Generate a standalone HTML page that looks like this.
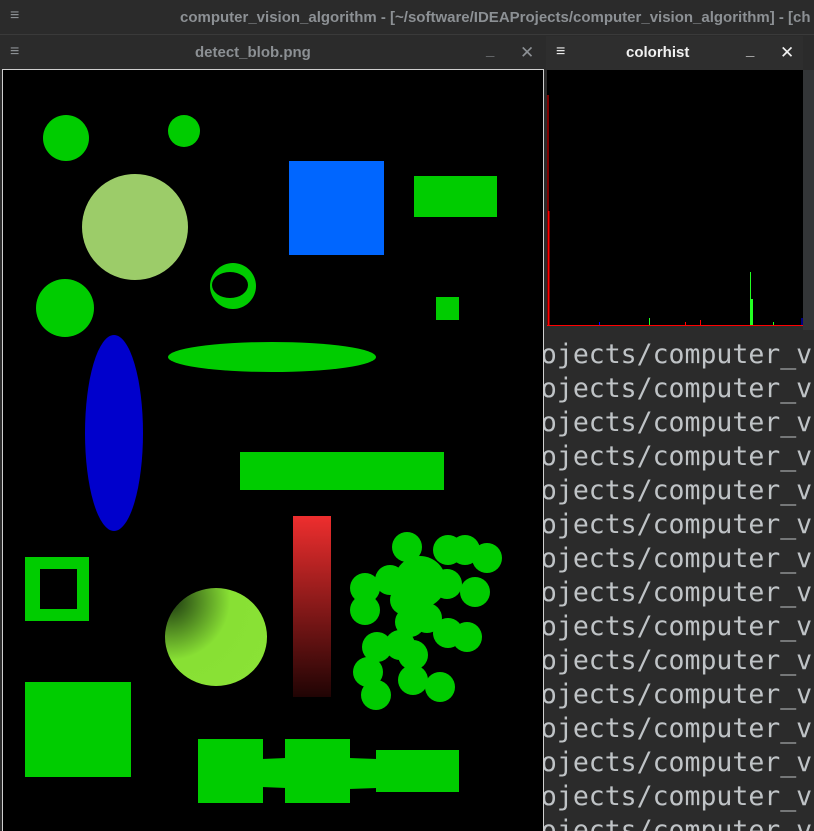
<!DOCTYPE html>
<html><head><meta charset="utf-8"><style>
*{margin:0;padding:0;box-sizing:border-box}
body{width:814px;height:831px;background:#2b2b2b;overflow:hidden;position:relative;font-family:"Liberation Sans",sans-serif}
.bar{position:absolute;left:0;top:0;width:814px;height:35px;background:#2b2b2b;border-bottom:1px solid #3a3a3a}
.t{position:absolute;color:#8c9094;font-weight:bold;font-size:15px;white-space:nowrap}
.ham{position:absolute;color:#8c9094;font-size:16px;font-weight:bold}
.term{position:absolute;left:543px;top:330px;width:271px;height:501px;overflow:hidden;background:#2b2b2b}
.term div{position:absolute;left:-34px;font-family:"DejaVu Sans Mono","Liberation Mono",monospace;font-size:26.5px;color:#bfc3c6;white-space:nowrap;line-height:34px}
</style></head><body>
<div class="bar"></div>
<div class="ham" style="left:10px;top:7px">≡</div>
<div class="t" style="left:180px;top:9px">computer_vision_algorithm - [~/software/IDEAProjects/computer_vision_algorithm] - [ch</div>
<div class="ham" style="left:10px;top:43px">≡</div>
<div class="t" style="left:195px;top:44px">detect_blob.png</div>
<div class="t" style="left:486px;top:42px">_</div>
<div class="t" style="left:520px;top:43px;font-weight:normal;font-size:17px">✕</div>
<div style="position:absolute;left:546px;top:36px;width:257px;height:34px;background:#2e2e2e"></div>
<div class="ham" style="left:556px;top:43px;color:#e8e8e8">≡</div>
<div class="t" style="left:626px;top:44px;color:#f0f0f0">colorhist</div>
<div class="t" style="left:746px;top:42px;color:#f0f0f0">_</div>
<div class="t" style="left:780px;top:43px;color:#f0f0f0;font-weight:normal;font-size:17px">✕</div>
<div style="position:absolute;left:803px;top:70px;width:11px;height:260px;background:#333537"></div>
<div class="term">
<div style="top:8px">projects/computer_vision</div>
<div style="top:42px">projects/computer_vision</div>
<div style="top:76px">projects/computer_vision</div>
<div style="top:110px">projects/computer_vision</div>
<div style="top:144px">projects/computer_vision</div>
<div style="top:178px">projects/computer_vision</div>
<div style="top:212px">projects/computer_vision</div>
<div style="top:246px">projects/computer_vision</div>
<div style="top:280px">projects/computer_vision</div>
<div style="top:314px">projects/computer_vision</div>
<div style="top:348px">projects/computer_vision</div>
<div style="top:382px">projects/computer_vision</div>
<div style="top:416px">projects/computer_vision</div>
<div style="top:450px">projects/computer_vision</div>
<div style="top:484px">projects/computer_vision</div>
</div>
<svg style="position:absolute;left:0;top:0" width="814" height="831">
<defs>
<linearGradient id="rg" x1="0" y1="0" x2="0" y2="1"><stop offset="0" stop-color="#ee2e2e"/><stop offset="1" stop-color="#200404"/></linearGradient>
<radialGradient id="cg" cx="170" cy="600" r="120" gradientUnits="userSpaceOnUse"><stop offset="0" stop-color="#1c3810"/><stop offset="0.5" stop-color="#88e034"/><stop offset="1" stop-color="#8ae236"/></radialGradient>
</defs>
<rect x="2.5" y="69.5" width="541" height="770" fill="#000" stroke="#cfcfcf"/>
<g fill="#00cc00">
<circle cx="66" cy="138" r="23"/><circle cx="184" cy="131" r="16"/>
<circle cx="65" cy="308" r="29"/>
<path fill-rule="evenodd" d="M210 286a23 23 0 1 0 46 0a23 23 0 1 0 -46 0ZM212 285a18 13 0 1 0 36 0a18 13 0 1 0 -36 0Z"/>
<rect x="414" y="176" width="83" height="41"/><rect x="436" y="297" width="23" height="23"/>
<ellipse cx="272" cy="357" rx="104" ry="15"/>
<rect x="240" y="452" width="204" height="38"/>
<path fill-rule="evenodd" d="M25 557h64v64h-64ZM40 569h37v40h-37Z"/>
<rect x="25" y="682" width="106" height="95"/>
<rect x="198" y="739" width="65" height="64"/><rect x="285" y="739" width="65" height="64"/><rect x="376" y="750" width="83" height="42"/>
<path d="M262 759L286 758L286 788L262 787Z"/><path d="M349 758L377 759L377 788L349 789Z"/>
<circle cx="407" cy="547" r="15"/><circle cx="448" cy="550" r="15"/><circle cx="465" cy="550" r="15"/><circle cx="487" cy="558" r="15"/>
<circle cx="365" cy="588" r="15"/><circle cx="390" cy="580" r="15"/><circle cx="420" cy="582" r="26"/><circle cx="447" cy="584" r="15"/><circle cx="475" cy="592" r="15"/>
<circle cx="365" cy="610" r="15"/><circle cx="427" cy="618" r="15"/><circle cx="410" cy="622" r="15"/><circle cx="448" cy="633" r="15"/><circle cx="467" cy="637" r="15"/>
<circle cx="377" cy="647" r="15"/><circle cx="400" cy="645" r="15"/><circle cx="413" cy="655" r="15"/><circle cx="368" cy="672" r="15"/><circle cx="413" cy="680" r="15"/><circle cx="440" cy="687" r="15"/><circle cx="376" cy="695" r="15"/><circle cx="405" cy="600" r="15"/>
</g>
<circle cx="135" cy="227" r="53" fill="#9ccc69"/>
<rect x="289" y="161" width="95" height="94" fill="#0066ff"/>
<ellipse cx="114" cy="433" rx="29" ry="98" fill="#0000cc"/>
<rect x="293" y="516" width="38" height="181" fill="url(#rg)"/>
<ellipse cx="216" cy="637" rx="51" ry="49" fill="url(#cg)"/>
<rect x="547" y="70" width="256" height="256" fill="#000"/>
<g stroke-width="1">
<line x1="548" y1="95" x2="548" y2="325" stroke="#f00"/><line x1="549" y1="211" x2="549" y2="325" stroke="#f00"/>
<line x1="547" y1="325.5" x2="803" y2="325.5" stroke="#f00"/>
<line x1="750.5" y1="272" x2="750.5" y2="325" stroke="#2f2"/><line x1="751.5" y1="299" x2="751.5" y2="325" stroke="#2f2"/><line x1="752.5" y1="299" x2="752.5" y2="325" stroke="#2f2"/>
<line x1="649.5" y1="318" x2="649.5" y2="325" stroke="#2f2"/><line x1="773.5" y1="322" x2="773.5" y2="325" stroke="#2f2"/>
<line x1="700.5" y1="320" x2="700.5" y2="325" stroke="#f00"/><line x1="685.5" y1="322" x2="685.5" y2="325" stroke="#f00"/>
<line x1="599.5" y1="322" x2="599.5" y2="325" stroke="#00f"/><line x1="802" y1="318" x2="802" y2="325" stroke="#00f"/>
</g>
</svg>
</body></html>
